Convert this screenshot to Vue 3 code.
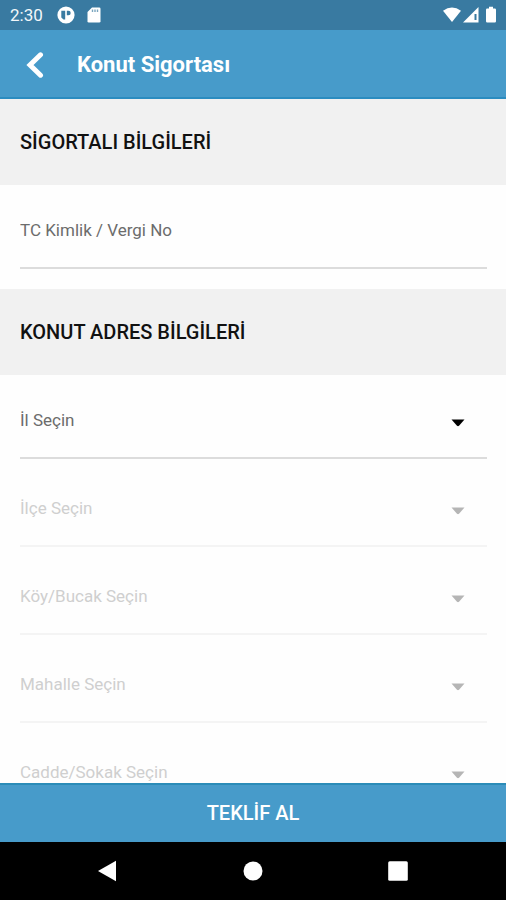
<script setup>
import { reactive } from 'vue'

const form = reactive({ identity: '', il: '', ilce: '', koy: '', mahalle: '', cadde: '' })

const selects = [
  { key: 'il', label: 'İl Seçin', disabled: false },
  { key: 'ilce', label: 'İlçe Seçin', disabled: true },
  { key: 'koy', label: 'Köy/Bucak Seçin', disabled: true },
  { key: 'mahalle', label: 'Mahalle Seçin', disabled: true },
  { key: 'cadde', label: 'Cadde/Sokak Seçin', disabled: true },
]
</script>

<template>
  <div class="screen">
    <div class="status">
      <span class="time">2:30</span>
      <svg class="status-app" width="18" height="18" viewBox="0 0 18 18" aria-hidden="true">
        <circle cx="9" cy="9" r="8.6" fill="#fff" />
        <path d="M4.300 4.800h3.900v8.700H6.500L4.300 11.500z" fill="#397aa1" />
        <path d="M9.800 4.800h1.700a2.200 2.200 0 0 1 0 4.400H9.800z" fill="#397aa1" />
      </svg>
      <svg class="status-card" width="14" height="16" viewBox="0 0 14 16" aria-hidden="true">
        <path d="M5 .5h7.200A1.300 1.300 0 0 1 13.500 1.800v12.400a1.300 1.300 0 0 1-1.300 1.300H1.800A1.300 1.300 0 0 1 .5 14.200V5z" fill="#fff" />
        <path d="M5.500 2.500v2.500M8 2.500v2.500M10.500 2.500v2.500" stroke="#7ba6bf" stroke-width="1.400" />
      </svg>
      <svg class="status-signals" width="56" height="18" viewBox="0 0 56 18" aria-hidden="true">
        <path d="M1 4.800Q10-1.800 19 4.800L10 16z" fill="#fff" />
        <path d="M21 16.500L36.500 1v15.500z" fill="#fff" />
        <path d="M33.500 8v6" stroke="#397aa1" stroke-width="2" />
        <path d="M47 .8h4v1.700h1.800a1.200 1.200 0 0 1 1.200 1.200v11.600a1.200 1.200 0 0 1-1.200 1.200h-7.600a1.200 1.200 0 0 1-1.200-1.200V3.700a1.200 1.200 0 0 1 1.200-1.200H47z" fill="#fff" />
      </svg>
    </div>

    <header class="header">
      <button class="back" type="button" aria-label="Geri">
        <svg width="18" height="26" viewBox="0 0 18 26" aria-hidden="true">
          <path d="M14.500 2.800L4 13l10.500 10.200" fill="none" stroke="#fff" stroke-width="5" stroke-linecap="round" stroke-linejoin="miter" />
        </svg>
      </button>
      <h1 class="title">Konut Sigortası</h1>
    </header>

    <main class="content">
      <h2 class="section">SİGORTALI BİLGİLERİ</h2>
      <div class="fields">
        <div class="field">
          <input
            v-model="form.identity"
            class="control"
            type="text"
            inputmode="numeric"
            placeholder="TC Kimlik / Vergi No"
            aria-label="TC Kimlik / Vergi No"
          />
        </div>
      </div>

      <h2 class="section">KONUT ADRES BİLGİLERİ</h2>
      <div class="fields">
        <div
          v-for="item in selects"
          :key="item.key"
          class="field"
          :class="{ disabled: item.disabled }"
        >
          <select v-model="form[item.key]" class="control" :disabled="item.disabled" :aria-label="item.label">
            <option value="">{{ item.label }}</option>
          </select>
          <svg class="arrow" width="14" height="8" viewBox="0 0 14 8" aria-hidden="true">
            <path d="M.5.5h13L8 6.800q-1 .9-2 0z" fill="currentColor" />
          </svg>
        </div>
      </div>
    </main>

    <button class="submit" type="button">TEKLİF AL</button>

    <nav class="system">
      <button class="key" type="button" aria-label="Geri">
        <svg width="22" height="22" viewBox="0 0 22 22" aria-hidden="true">
          <path d="M19 .8v20.400L1 11z" fill="#fff" />
        </svg>
      </button>
      <button class="key" type="button" aria-label="Ana ekran">
        <svg width="22" height="22" viewBox="0 0 22 22" aria-hidden="true">
          <circle cx="11" cy="11" r="9.500" fill="#fff" />
        </svg>
      </button>
      <button class="key" type="button" aria-label="Son uygulamalar">
        <svg width="22" height="22" viewBox="0 0 22 22" aria-hidden="true">
          <rect x="1.200" y="1.200" width="19.600" height="19.600" rx="1.500" fill="#fff" />
        </svg>
      </button>
    </nav>
  </div>
</template>

<style>
body {
  margin: 0;
}
</style>

<style scoped>
.screen {
  display: flex;
  flex-direction: column;
  height: 100vh;
  overflow: hidden;
  background: #fefefe;
  font-family: Roboto, "Liberation Sans", sans-serif;
}

button {
  border: 0;
  padding: 0;
  background: none;
  font-family: inherit;
  cursor: pointer;
}

svg {
  display: block;
}

.status {
  display: flex;
  flex: none;
  align-items: center;
  height: 30px;
  padding: 0 8px 0 10px;
  background: #397aa1;
  color: #f2f7fa;
}

.time {
  font-size: 17px;
  line-height: 20px;
}

.status-app {
  margin-left: 14px;
}

.status-card {
  margin-left: 12px;
}

.status-signals {
  margin-left: auto;
}

.header {
  display: flex;
  flex: none;
  align-items: center;
  box-sizing: border-box;
  height: 69px;
  padding: 1px 0 0 26px;
  background: #479bca;
  box-shadow: inset 0 -2px #2b8cc0;
}

.title {
  margin: 0 0 0 33px;
  color: #fff;
  font-size: 22px;
  font-weight: 700;
  line-height: 28px;
}

.content {
  flex: 1;
  min-height: 0;
  overflow-y: auto;
  scrollbar-width: none;
}

.section {
  margin: 0;
  padding: 29px 20px;
  background: #f1f1f1;
  color: #111;
  font-size: 20px;
  font-weight: 500;
  line-height: 28px;
}

.fields {
  display: grid;
  gap: 4px;
  padding: 0 19px 20px 20px;
}

.field {
  display: grid;
  grid-template-columns: 1fr 36px;
  align-items: center;
  box-sizing: border-box;
  height: 84px;
  padding-top: 8px;
  border-bottom: 2px solid #dcdcdc;
}

.control {
  grid-area: 1 / 1 / 2 / 3;
  appearance: none;
  box-sizing: border-box;
  width: 100%;
  margin: 0;
  padding: 0;
  border: 0;
  outline: 0;
  background: none;
  color: #6c6c6c;
  font-family: inherit;
  font-size: 17px;
  line-height: 24px;
}

.control::placeholder {
  color: #6c6c6c;
  opacity: 1;
}

.control:disabled {
  color: #cfcfcf;
  opacity: 1;
}

.arrow {
  grid-area: 1 / 2;
  margin-top: 6px;
  color: #000;
  pointer-events: none;
}

.disabled {
  border-color: #f4f4f4;
}

.disabled .arrow {
  color: #b5b5b5;
}

.submit {
  flex: none;
  height: 59px;
  background: #479bca;
  box-shadow: inset 0 2px #2b8cb8;
  color: #fff;
  font-size: 20px;
  font-weight: 500;
}

.system {
  display: flex;
  flex: none;
  align-items: center;
  justify-content: space-around;
  height: 58px;
  padding: 0 7%;
  background: #000;
}

.key {
  display: flex;
  justify-content: center;
  width: 22px;
}
</style>
